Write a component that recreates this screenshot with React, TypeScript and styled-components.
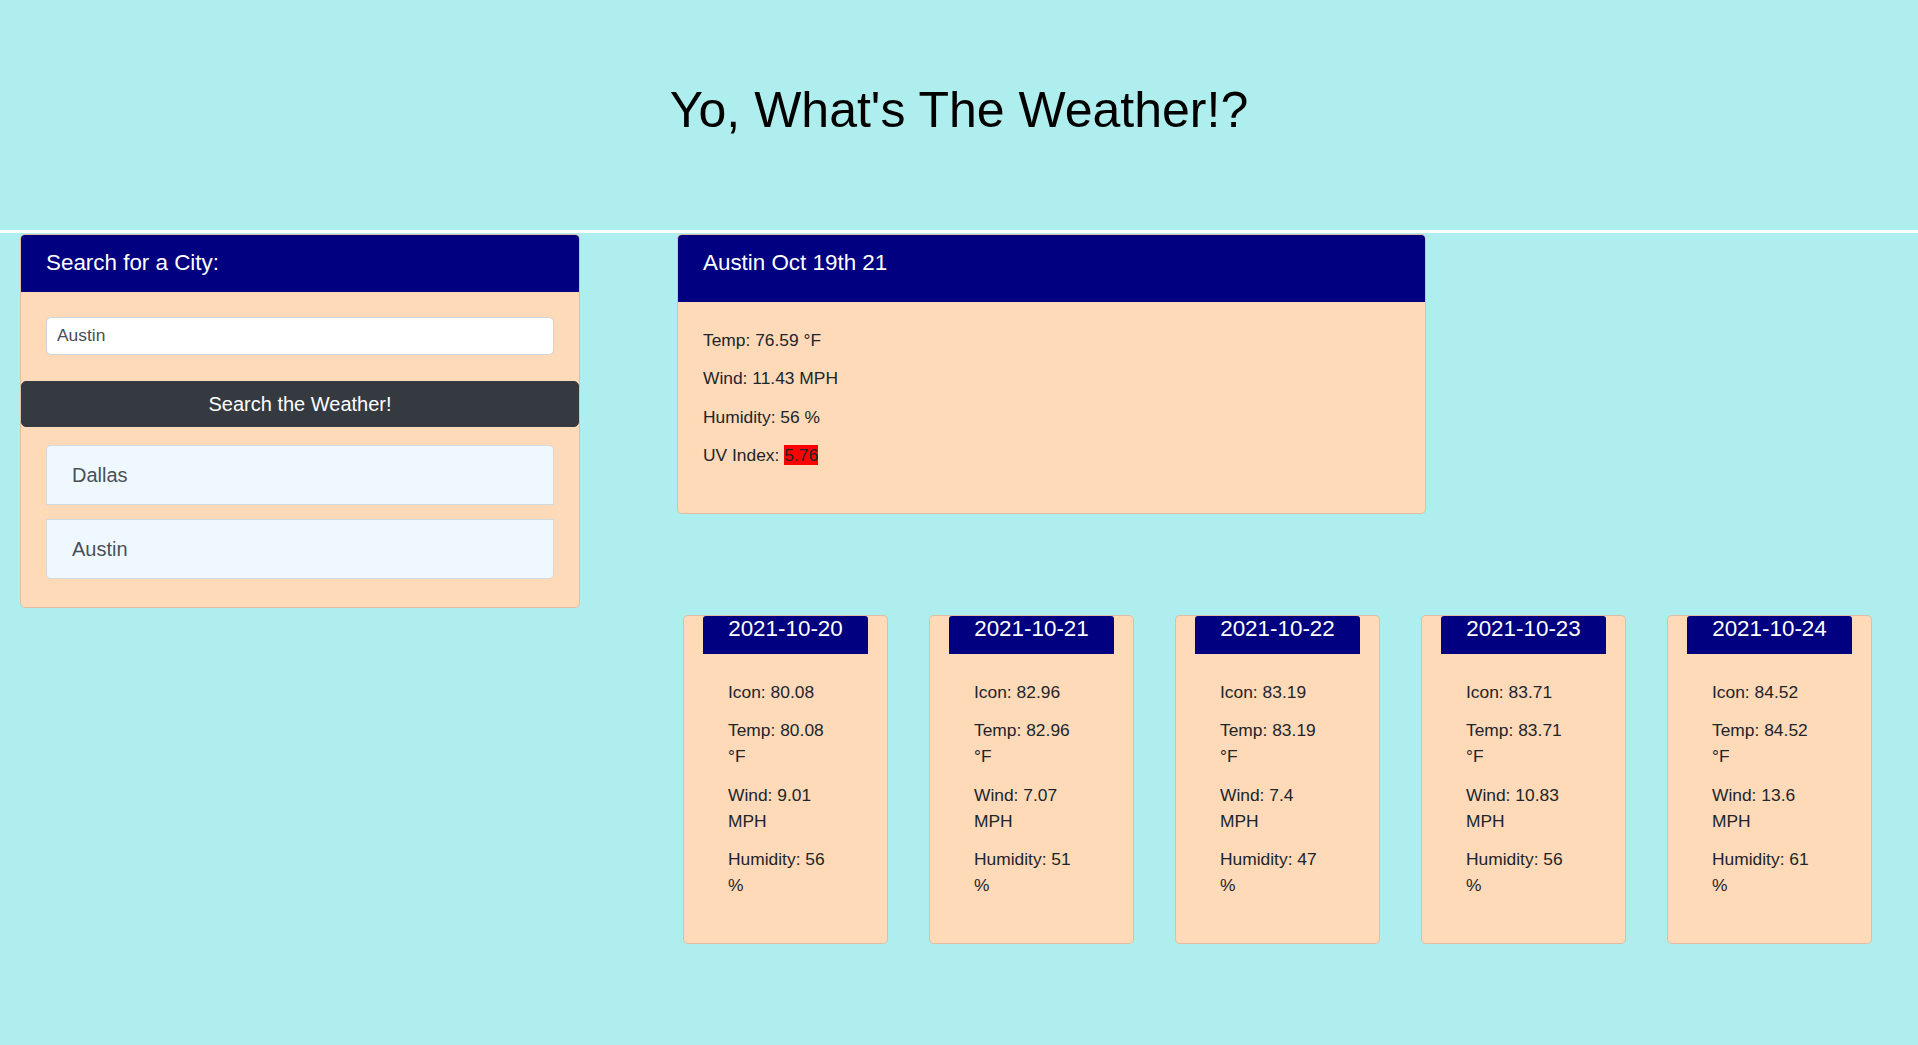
import React from "react"
import styled, { createGlobalStyle } from "styled-components"

type ForecastDay = {
    date: string
    icon: string
    temp: string
    wind: string
    humidity: number
}

const forecast: ForecastDay[] = [
    { date: "2021-10-20", icon: "80.08", temp: "80.08", wind: "9.01", humidity: 56 },
    { date: "2021-10-21", icon: "82.96", temp: "82.96", wind: "7.07", humidity: 51 },
    { date: "2021-10-22", icon: "83.19", temp: "83.19", wind: "7.4", humidity: 47 },
    { date: "2021-10-23", icon: "83.71", temp: "83.71", wind: "10.83", humidity: 56 },
    { date: "2021-10-24", icon: "84.52", temp: "84.52", wind: "13.6", humidity: 61 },
]

const history = ["Dallas", "Austin"]

export default function App() {
    return (
        <>
            <GlobalStyle />
            <Header>
                <Title>Yo, What's The Weather!?</Title>
            </Header>
            <Main>
                <SearchCard>
                    <CardHeader>Search for a City:</CardHeader>
                    <SearchBody>
                        <CityInput defaultValue="Austin" />
                    </SearchBody>
                    <SearchButton type="button">Search the Weather!</SearchButton>
                    <CityList>
                        {history.map((city) => (
                            <CityItem key={city}>{city}</CityItem>
                        ))}
                    </CityList>
                </SearchCard>

                <RightColumn>
                    <CurrentCard>
                        <CardHeader $bottom={25}>Austin Oct 19th 21</CardHeader>
                        <CurrentBody>
                            <Stat>Temp: 76.59 °F</Stat>
                            <Stat>Wind: 11.43 MPH</Stat>
                            <Stat>Humidity: 56 %</Stat>
                            <Stat>UV Index: <UvBadge>5.76</UvBadge></Stat>
                        </CurrentBody>
                    </CurrentCard>

                    <ForecastRow>
                        {forecast.map((day) => (
                            <ForecastCard key={day.date}>
                                <DateTab>{day.date}</DateTab>
                                <ForecastBody>
                                    <Stat>Icon: {day.icon}</Stat>
                                    <Stat>Temp: {day.temp} °F</Stat>
                                    <Stat>Wind: {day.wind} MPH</Stat>
                                    <Stat>Humidity: {day.humidity} %</Stat>
                                </ForecastBody>
                            </ForecastCard>
                        ))}
                    </ForecastRow>
                </RightColumn>
            </Main>
        </>
    )
}

const GlobalStyle = createGlobalStyle`
    html, body {
        margin: 0;
        padding: 0;
        background-color: #afeeee;
        min-height: 100%;
    }
    body {
        font-family: "Liberation Sans", Arial, sans-serif;
        color: #212529;
    }
    * {
        box-sizing: border-box;
    }
`

const Header = styled.header`
    height: 233px;
    padding-top: 80px;
    text-align: center;
    border-bottom: 3px solid #ffffff;
`

const Title = styled.h1`
    margin: 0;
    font-size: 50px;
    font-weight: 400;
    line-height: 1.2;
    color: #000000;
`

const Main = styled.main`
    display: flex;
    align-items: flex-start;
    gap: 97px;
    padding: 1px 0 0 20px;
`

const Card = styled.section`
    background-color: #ffdab9;
    border: 1px solid rgba(0, 0, 0, 0.125);
    border-radius: 5px;
`

const SearchCard = styled(Card)`
    width: 560px;
    flex-shrink: 0;
`

const CardHeader = styled.div<{ $bottom?: number }>`
    background-color: #000080;
    color: #ffffff;
    font-size: 22.4px;
    line-height: 1.2;
    padding: 15px 25px ${(p) => p.$bottom ?? 15}px;
    border-radius: 4px 4px 0 0;
`

const SearchBody = styled.div`
    padding: 25px 25px 26px;
`

const CityInput = styled.input`
    display: block;
    width: 100%;
    height: 38px;
    padding: 5px 10px;
    font-family: inherit;
    font-size: 17.4px;
    line-height: 1.5;
    color: #495057;
    background-color: #ffffff;
    border: 1px solid #ced4da;
    border-radius: 5px;
    outline: none;
`

const SearchButton = styled.button`
    display: block;
    width: 100%;
    padding: 7px 12px;
    font-family: inherit;
    font-size: 20px;
    line-height: 1.5;
    color: #ffffff;
    background-color: #343a40;
    border: 1px solid #343a40;
    border-radius: 5px;
    cursor: pointer;
`

const CityList = styled.ul`
    list-style: none;
    margin: 0;
    padding: 18px 25px 28px;
`

const CityItem = styled.li`
    background-color: #f0f8ff;
    border: 1px solid rgba(0, 0, 0, 0.125);
    padding: 14px 25px;
    font-size: 20px;
    line-height: 1.5;
    color: #495057;
    &:first-child {
        border-radius: 5px 5px 0 0;
    }
    &:last-child {
        border-radius: 0 0 5px 5px;
    }
    & + & {
        margin-top: 14px;
    }
`

const RightColumn = styled.div`
    display: flex;
    flex-direction: column;
`

const CurrentCard = styled(Card)`
    width: 749px;
`

const CurrentBody = styled.div`
    padding: 25px 25px 32px;
`

const Stat = styled.p`
    margin: 0 0 12.5px;
    font-size: 17.4px;
    line-height: 26px;
`

const UvBadge = styled.span`
    background-color: #ff0000;
`

const ForecastRow = styled.div`
    display: flex;
    gap: 41px;
    margin-top: 101px;
    padding-left: 6px;
`

const ForecastCard = styled(Card)`
    width: 205px;
    padding: 0 19px;
`

const DateTab = styled.div`
    height: 38px;
    padding-bottom: 11px;
    background-color: #000080;
    color: #ffffff;
    text-align: center;
    font-size: 22.4px;
    line-height: 1.2;
    border-radius: 3px 3px 0 0;
`

const ForecastBody = styled.div`
    padding: 25px 30px 32px 25px;
`
